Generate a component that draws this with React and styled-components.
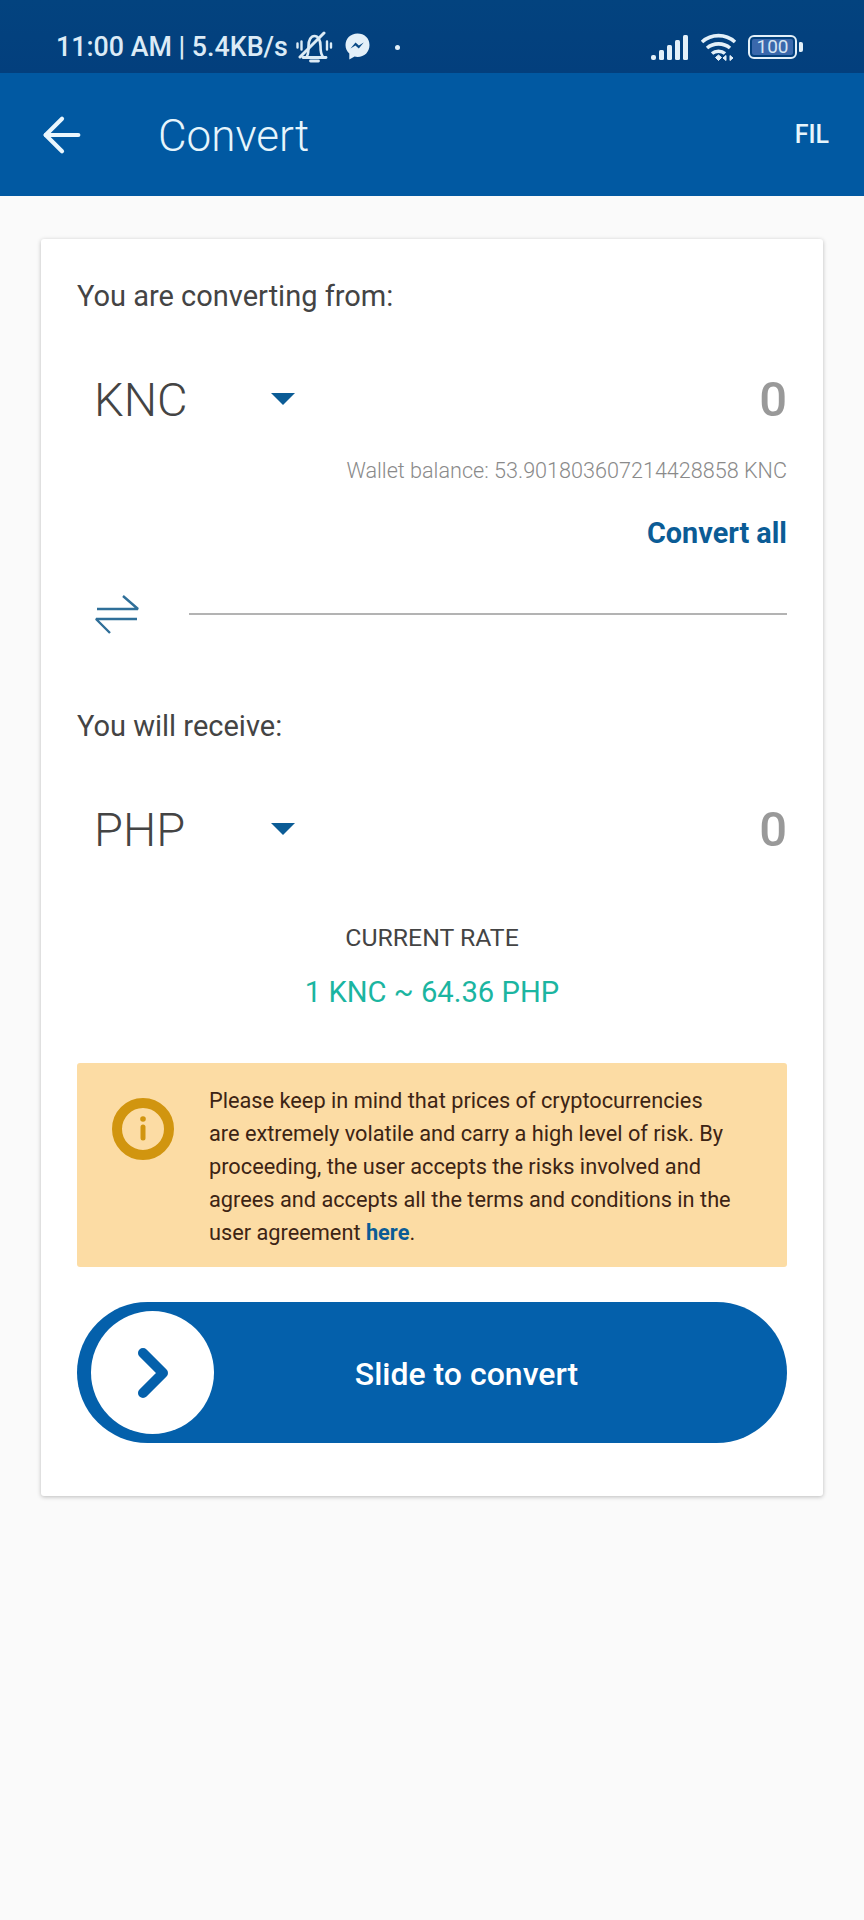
import React from 'react';
import styled, { createGlobalStyle } from 'styled-components';
import { ArrowLeft, ChevronRight } from 'lucide-react';

const GlobalStyle = createGlobalStyle`
  html, body {
    margin: 0;
    padding: 0;
    background: #fafafa;
  }
  body {
    font-family: Roboto, "Liberation Sans", sans-serif;
  }
`;

export default function App() {
  return (
    <Page>
      <GlobalStyle />
      <StatusBar>
        <StatusLeft>
          <StatusText>11:00 AM | 5.4KB/s</StatusText>
          <MutedBell />
          <Messenger />
          <StatusDot />
        </StatusLeft>
        <StatusRight>
          <SignalBars />
          <Wifi />
          <Battery>
            <BatteryBody>
              <BatteryFill />
              <BatteryLevel>100</BatteryLevel>
            </BatteryBody>
            <BatteryTip />
          </Battery>
        </StatusRight>
      </StatusBar>

      <AppBar>
        <BackButton>
          <ArrowLeft size={56} strokeWidth={1.8} color="#eaf6fd" />
        </BackButton>
        <Title>Convert</Title>
        <Lang>FIL</Lang>
      </AppBar>

      <Card>
        <SectionLabel>You are converting from:</SectionLabel>
        <CurrencyRow $mt={53}>
          <CurrencyPicker>
            <CurrencyCode>KNC</CurrencyCode>
            <Caret />
          </CurrencyPicker>
          <Amount>0</Amount>
        </CurrencyRow>
        <Balance>Wallet balance: 53.901803607214428858 KNC</Balance>
        <ConvertAll>Convert all</ConvertAll>
        <SwapRow>
          <SwapIcon />
          <Divider />
        </SwapRow>

        <SectionLabel $mt={72}>You will receive:</SectionLabel>
        <CurrencyRow $mt={53}>
          <CurrencyPicker>
            <CurrencyCode>PHP</CurrencyCode>
            <Caret />
          </CurrencyPicker>
          <Amount>0</Amount>
        </CurrencyRow>

        <RateLabel>CURRENT RATE</RateLabel>
        <RateValue>1 KNC ~ 64.36 PHP</RateValue>

        <Notice>
          <NoticeIcon />
          <NoticeText>
            Please keep in mind that prices of cryptocurrencies
            <br />
            are extremely volatile and carry a high level of risk. By
            <br />
            proceeding, the user accepts the risks involved and
            <br />
            agrees and accepts all the terms and conditions in the
            <br />
            user agreement <NoticeLink>here</NoticeLink>.
          </NoticeText>
        </Notice>

        <Slider>
          <Knob>
            <ChevronRight size={80} strokeWidth={3} color="#0460ab" />
          </Knob>
          <SliderLabel>Slide to convert</SliderLabel>
        </Slider>
      </Card>
    </Page>
  );
}

function MutedBell() {
  return (
    <svg width="37" height="32" viewBox="0 0 37 32" fill="none" stroke="#dcebf6" strokeLinecap="round">
      <path d="M11 25c1.500-2 1.500-5 1.500-10 0-6 2.500-10 6-10s6 4 6 10c0 5 .5 8 2 10" strokeWidth="2.600" />
      <path d="M7 26.500h23" strokeWidth="2.800" />
      <path d="M14.500 30h8" strokeWidth="2.800" />
      <path d="M4 26 28 2" strokeWidth="3" />
      <path d="M5.500 10.500v8M1.500 12.500v4M31 10.500v8M35 12.500v4" strokeWidth="2.400" />
    </svg>
  );
}

function Messenger() {
  return (
    <svg width="25" height="28" viewBox="0 0 25 28">
      <path
        d="M12.500.5C5.600.5.500 5.500.500 12c0 3.500 1.400 6.500 3.800 8.600v5.900l5.300-2.900c.9.200 1.900.4 2.900.4 6.900 0 12-5 12-12S19.400.5 12.500.5z"
        fill="#e3f0f9"
      />
      <path d="m5.500 15.500 5-6 3.400 3 4.800-3-4.900 6-3.400-3z" fill="#0a4a86" />
    </svg>
  );
}

function SignalBars() {
  return (
    <svg width="38" height="25" viewBox="0 0 38 25" fill="#e3f0f9">
      <rect x="0" y="20" width="5" height="5" rx="2" />
      <rect x="8" y="15" width="5" height="10" rx="1.500" />
      <rect x="16" y="10" width="5" height="15" rx="1.500" />
      <rect x="24" y="5" width="5" height="20" rx="1.500" />
      <rect x="32" y="0" width="5" height="25" rx="1.500" />
    </svg>
  );
}

function Wifi() {
  return (
    <svg width="37" height="29" viewBox="0 0 37 29" fill="none" stroke="#e3f0f9" strokeWidth="3.600">
      <path d="M2 9c9.500-8.500 23.500-8.500 33 0" />
      <path d="M7 15c6.500-5.500 16.500-5.500 23 0" />
      <path d="M12 20.500c3.500-3 9.500-3 13 0" />
      <path d="m15.500 24.500 3-2.500 3 2.500-3 3z" fill="#e3f0f9" strokeWidth="1" />
      <path d="M26 22.500v5l-3-2.500zM30 27.500v-5l3 2.500z" fill="#e3f0f9" strokeWidth="1" />
    </svg>
  );
}

function SwapIcon() {
  return (
    <svg width="46" height="40" viewBox="0 0 46 40" fill="none" stroke="#2f6f99" strokeWidth="2.400" strokeLinejoin="bevel">
      <path d="M3 15h41L29 2" />
      <path d="M43 25H2l14 14" />
    </svg>
  );
}

function NoticeIcon() {
  return (
    <svg width="62" height="62" viewBox="0 0 62 62" fill="none" stroke="#d1950f">
      <circle cx="31" cy="31" r="26" strokeWidth="10" />
      <path d="M31 29v11" strokeWidth="5" strokeLinecap="round" />
      <circle cx="31" cy="21" r="2.800" fill="#d1950f" stroke="none" />
    </svg>
  );
}

const Page = styled.div`
  width: 864px;
  min-height: 1920px;
  background: #fafafa;
  overflow: hidden;
`;

const StatusBar = styled.div`
  height: 73px;
  box-sizing: border-box;
  padding: 31px 61px 0 56px;
  display: flex;
  justify-content: space-between;
  align-items: flex-start;
  background: linear-gradient(#03437f, #033f7d);
`;

const StatusLeft = styled.div`
  display: flex;
  align-items: center;
  height: 32px;

  svg {
    flex: none;
  }
  svg + svg {
    margin-left: 12px;
  }
`;

const StatusText = styled.span`
  color: #dcebf6;
  font-size: 26.800px;
  font-weight: 500;
  line-height: 32px;
  margin-right: 8px;
`;

const StatusDot = styled.span`
  width: 5px;
  height: 5px;
  border-radius: 50%;
  background: #e3f0f9;
  margin-left: 25px;
`;

const StatusRight = styled.div`
  display: flex;
  align-items: center;
  gap: 11px;
  height: 32px;
`;

const Battery = styled.div`
  display: flex;
  align-items: center;
  gap: 2px;
`;

const BatteryBody = styled.div`
  position: relative;
  width: 49px;
  height: 24px;
  box-sizing: border-box;
  border: 2.500px solid #e3f0f9;
  border-radius: 6px;
  padding: 2px;
  display: flex;
`;

const BatteryFill = styled.div`
  flex: 1;
  background: #3a68ac;
  border-radius: 2px;
`;

const BatteryLevel = styled.div`
  position: absolute;
  inset: 0;
  color: #d5e5f2;
  font-size: 19px;
  line-height: 19px;
  text-align: center;
`;

const BatteryTip = styled.div`
  width: 4px;
  height: 10px;
  background: #e3f0f9;
  border-radius: 1px 2px 2px 1px;
`;

const AppBar = styled.header`
  height: 123px;
  display: flex;
  align-items: center;
  background: #0159a2;
  padding: 0 35px 0 34px;
`;

const BackButton = styled.div`
  display: flex;
  width: 124px;
`;

const Title = styled.h1`
  flex: 1;
  margin: 2px 0 0;
  color: #e6f5fc;
  font-size: 44px;
  font-weight: 300;
`;

const Lang = styled.span`
  color: #e6f5fc;
  font-size: 25px;
  font-weight: 500;
`;

const Card = styled.main`
  margin: 43px 41px 0;
  padding: 37px 36px 53px;
  background: #fff;
  border-radius: 3px;
  box-shadow: 0 1px 4px rgba(0, 0, 0, 0.25);
`;

const SectionLabel = styled.div`
  margin-top: ${(p) => p.$mt || 0}px;
  color: #444;
  font-size: 29px;
  line-height: 40px;
`;

const CurrencyRow = styled.div`
  margin-top: ${(p) => p.$mt}px;
  height: 60px;
  display: flex;
  align-items: center;
  justify-content: space-between;
`;

const CurrencyPicker = styled.div`
  display: flex;
  align-items: center;
  padding-left: 17px;
`;

const CurrencyCode = styled.span`
  width: 177px;
  color: #444;
  font-size: 47px;
  font-weight: 300;
`;

const Caret = styled.span`
  width: 0;
  height: 0;
  border-left: 12px solid transparent;
  border-right: 12px solid transparent;
  border-top: 12px solid #0b5c96;
`;

const Amount = styled.span`
  color: #999;
  font-size: 49px;
  font-weight: 500;
`;

const Balance = styled.div`
  margin-top: 27px;
  color: #8a8a8a;
  font-size: 21.600px;
  font-weight: 300;
  line-height: 30px;
  text-align: right;
`;

const ConvertAll = styled.div`
  margin-top: 29px;
  color: #0b5c96;
  font-size: 28.800px;
  font-weight: 700;
  line-height: 36px;
  text-align: right;
`;

const SwapRow = styled.div`
  margin-top: 43px;
  height: 40px;
  padding-left: 17px;
  display: flex;
  align-items: center;
  gap: 49px;
`;

const Divider = styled.div`
  flex: 1;
  height: 2px;
  background: #b3b3b3;
`;

const RateLabel = styled.div`
  margin-top: 64px;
  color: #444;
  font-size: 24.800px;
  line-height: 30px;
  text-align: center;
`;

const RateValue = styled.div`
  margin-top: 19px;
  color: #1bb5a1;
  font-size: 29.200px;
  line-height: 40px;
  text-align: center;
`;

const Notice = styled.div`
  margin-top: 51px;
  height: 204px;
  box-sizing: border-box;
  padding: 35px 0 0 35px;
  display: flex;
  align-items: flex-start;
  gap: 35px;
  background: #fcdca4;
  border-radius: 3px;
`;

const NoticeText = styled.p`
  margin: -14px 0 0;
  color: #3d2414;
  font-size: 21.750px;
  line-height: 33px;
  white-space: nowrap;
`;

const NoticeLink = styled.span`
  color: #0b5c96;
  font-weight: 700;
`;

const Slider = styled.div`
  margin-top: 35px;
  height: 141px;
  padding-left: 14px;
  display: flex;
  align-items: center;
  background: #0460ab;
  border-radius: 71px;
`;

const Knob = styled.div`
  width: 123px;
  height: 123px;
  flex: none;
  display: flex;
  align-items: center;
  justify-content: center;
  background: #fff;
  border-radius: 50%;
`;

const SliderLabel = styled.div`
  flex: 1;
  padding: 2px 68px 0 0;
  color: #fff;
  font-size: 32px;
  font-weight: 500;
  text-align: center;
`;
